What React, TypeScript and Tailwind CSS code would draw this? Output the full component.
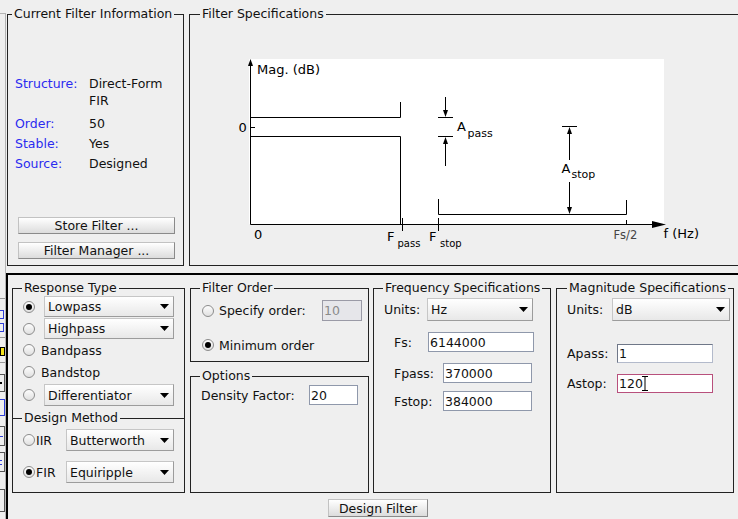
import React from 'react';

const Radio = ({ on }: { on?: boolean }) => (
  <span className="w-[12px] h-[12px] shrink-0 rounded-full border border-[#8c8c8c] bg-linear-to-b from-[#fdfdfd] to-[#e0e0e0] flex items-center justify-center">
    {on && <span className="w-[6px] h-[6px] rounded-full bg-black" />}
  </span>
);

const Select = ({ value, className }: { value: string; className: string }) => (
  <div
    className={`flex items-center justify-between shrink-0 pl-[3px] pr-[4px] border border-[#c6c6c6] border-r-[#9c9c9c] border-b-[#9c9c9c] bg-linear-to-b from-white to-[#e8e8e8] ${className}`}
  >
    <span>{value}</span>
    <svg width="9" height="5" viewBox="0 0 9 5">
      <path d="M0 0H9L4.5 5Z" fill="#000" />
    </svg>
  </div>
);

const Field = ({ children, className }: { children: React.ReactNode; className: string }) => (
  <div className={`flex items-center shrink-0 pl-[1px] border ${className}`}>{children}</div>
);

const Btn = ({ children, className }: { children: React.ReactNode; className: string }) => (
  <button
    type="button"
    className={`flex items-center justify-center border border-[#c2c2c2] border-r-[#8a8a8a] border-b-[#8a8a8a] bg-linear-to-b from-white to-[#dcdcdc] ${className}`}
  >
    {children}
  </button>
);

function FilterPlot() {
  return (
    <svg width="548" height="244" viewBox="190 21 548 244" className="block">
      <rect x="249" y="59" width="415" height="165" fill="#fff" />
      <g stroke="#000" strokeWidth="1" fill="none">
        <path d="M250.5 64V224.5H655" />
        <path d="M250 117.5H400.5V102" />
        <path d="M250 136.5H400.5V224" />
        <path d="M250 127.5H255" />
        <path d="M445.5 97V112M445.5 142V166M438 117.5H453M438 136.5H453" />
        <path d="M438.5 199V214.5H626.5V200" />
        <path d="M562 126.5H577M569.5 132V160M569.5 182V209" />
        <path d="M402.5 218V231M438.5 218V231M626.5 220V224" />
      </g>
      <g fill="#000">
        <polygon points="250.5,59 248,66 253,66" />
        <polygon points="652,221 666,224.5 652,228" />
        <polygon points="443,110 448,110 445.5,117" />
        <polygon points="445.5,137 443,144 448,144" />
        <polygon points="569.5,127 567,134 572,134" />
        <polygon points="569.5,214 567,207 572,207" />
      </g>
      <g fill="#000" fontSize="13">
        <text x="257" y="74">Mag. (dB)</text>
        <text x="238.5" y="131.5">0</text>
        <text x="254" y="239">0</text>
        <text x="387" y="241">F</text>
        <text x="397.5" y="247" fontSize="10">pass</text>
        <text x="429" y="241">F</text>
        <text x="440" y="247" fontSize="10">stop</text>
        <text x="457" y="131">A</text>
        <text x="467.5" y="137" fontSize="11">pass</text>
        <text x="561.5" y="172.5">A</text>
        <text x="571.5" y="178" fontSize="11">stop</text>
        <text x="613.5" y="239" fontSize="11.5" fill="#444">Fs/2</text>
        <text x="663.5" y="238">f (Hz)</text>
      </g>
    </svg>
  );
}

function ToolStrip() {
  return (
    <div className="w-[6px] h-[253px] shrink-0 border-r border-[#b4b4b4] flex flex-col">
      <div className="mt-[32px] h-px w-[5px] bg-[#9a9a9a]" />
      <div className="mt-[11px] h-[9px] w-[4px] border-y border-r border-[#2f3fd8]" />
      <div className="mt-[4px] h-[9px] w-[4px] border-y border-r border-[#2f3fd8]" />
      <div className="mt-[5px] h-px w-[5px] bg-[#9a9a9a]" />
      <div className="mt-[9px] h-[9px] w-[5px] border border-black bg-[#f5e21a]" />
      <div className="mt-[6px] h-px w-[5px] bg-[#9a9a9a]" />
      <div className="mt-[11px] h-[18px] w-[5px] border-y border-r border-[#555] flex items-center">
        <span className="w-[2px] h-[2px] bg-black" />
      </div>
      <div className="mt-[7px] h-[17px] w-[5px] border-y border-r border-[#2f3fd8]" />
      <div className="mt-[10px] h-[20px] w-[5px] border-y border-r border-[#555] flex items-center">
        <span className="w-[3px] h-px bg-[#2f3fd8]" />
      </div>
      <div className="mt-[6px] h-[20px] w-[5px] border-y border-r border-[#555] flex flex-col justify-center gap-[3px]">
        <span className="w-[2px] h-px bg-[#2f3fd8]" />
        <span className="w-[2px] h-px bg-[#2f3fd8]" />
      </div>
      <div className="mt-[17px] h-[23px] w-[5px] border-y border-r border-[#555]" />
    </div>
  );
}

export default function App() {
  return (
    <div className="w-[738px] h-[519px] overflow-hidden bg-[#efefef] font-['DejaVu_Sans',sans-serif] text-[12.5px] leading-[15px] text-[#111]">
      {/* upper half */}
      <div className="flex h-[266px]">
        <div className="w-[7px] shrink-0 pt-[13px]">
          <div className="w-[6px] h-[253px] border-t border-r border-[#b4b4b4]" />
        </div>

        <fieldset className="mt-[7px] w-[177px] h-[259px] shrink-0 border border-[#222]">
          <legend className="ml-[4px] px-[2px] leading-[14px]">Current Filter Information</legend>
          <div className="pl-[7px] mt-[54px]">
            <div className="grid grid-cols-[74px_1fr] leading-[17px]">
              <span className="text-[#2b2bf0]">Structure:</span>
              <span>
                Direct-Form
                <br />
                FIR
              </span>
            </div>
            <div className="grid grid-cols-[74px_1fr] leading-[20px] mt-[5px]">
              <span className="text-[#2b2bf0]">Order:</span>
              <span>50</span>
              <span className="text-[#2b2bf0]">Stable:</span>
              <span>Yes</span>
              <span className="text-[#2b2bf0]">Source:</span>
              <span>Designed</span>
            </div>
          </div>
          <Btn className="mt-[43px] ml-[10px] w-[157px] h-[17px]">Store Filter ...</Btn>
          <Btn className="mt-[8px] ml-[10px] w-[157px] h-[17px]">Filter Manager ...</Btn>
        </fieldset>

        <fieldset className="mt-[7px] ml-[5px] w-[560px] h-[259px] shrink-0 border border-[#222]">
          <legend className="ml-[10px] px-[2px] leading-[14px]">Filter Specifications</legend>
          <FilterPlot />
        </fieldset>
      </div>

      {/* lower half */}
      <div className="flex h-[253px]">
        <ToolStrip />
        <div className="mt-[7px] w-[740px] h-[260px] shrink-0 border-l-2 border-t-2 border-black pl-[4px] pt-[6px]">
          <div className="flex items-start">
            {/* Response type + design method */}
            <div className="w-[173px] shrink-0">
              <fieldset className="h-[137px] border border-b-0 border-[#222]">
                <legend className="ml-[9px] px-[2px] leading-[14px]">Response Type</legend>
                <div className="pl-[10px]">
                  <div className="mt-[1px] h-[21px] flex items-center">
                    <Radio on />
                    <Select value="Lowpass" className="ml-[9px] w-[130px] h-[21px]" />
                  </div>
                  <div className="mt-[1px] h-[21px] flex items-center">
                    <Radio />
                    <Select value="Highpass" className="ml-[9px] w-[130px] h-[21px]" />
                  </div>
                  <div className="h-[22px] flex items-center">
                    <Radio />
                    <span className="ml-[6px]">Bandpass</span>
                  </div>
                  <div className="h-[22px] flex items-center">
                    <Radio />
                    <span className="ml-[6px]">Bandstop</span>
                  </div>
                  <div className="mt-[1px] h-[22px] flex items-center">
                    <Radio />
                    <Select value="Differentiator" className="ml-[9px] w-[130px] h-[22px]" />
                  </div>
                </div>
              </fieldset>
              <fieldset className="-mt-[7px] h-[82px] border border-[#222]">
                <legend className="ml-[9px] px-[2px] leading-[14px]">Design Method</legend>
                <div className="pl-[10px]">
                  <div className="mt-[4px] h-[22px] flex items-center">
                    <Radio />
                    <span className="ml-[1px] w-[30px]">IIR</span>
                    <Select value="Butterworth" className="w-[108px] h-[22px]" />
                  </div>
                  <div className="mt-[10px] h-[22px] flex items-center">
                    <Radio on />
                    <span className="ml-[1px] w-[30px]">FIR</span>
                    <Select value="Equiripple" className="w-[108px] h-[22px]" />
                  </div>
                </div>
              </fieldset>
            </div>

            {/* Filter order + options */}
            <div className="ml-[5px] w-[179px] shrink-0">
              <fieldset className="h-[81px] border border-[#222]">
                <legend className="ml-[9px] px-[2px] leading-[14px]">Filter Order</legend>
                <div className="pl-[11px] pr-[6px]">
                  <div className="mt-[5px] h-[21px] flex items-center">
                    <Radio />
                    <span className="ml-[5px] flex-1">Specify order:</span>
                    <Field className="w-[40px] h-[21px] bg-[#e6e6ea] border-[#9a9aa6] text-[#8a8a8a]">10</Field>
                  </div>
                  <div className="mt-[13px] h-[22px] flex items-center">
                    <Radio on />
                    <span className="ml-[5px]">Minimum order</span>
                  </div>
                </div>
              </fieldset>
              <fieldset className="mt-[7px] h-[124px] border border-[#222]">
                <legend className="ml-[9px] px-[2px] leading-[14px]">Options</legend>
                <div className="pl-[10px] mt-[2px] h-[20px] flex items-center">
                  <span className="w-[108px]">Density Factor:</span>
                  <Field className="w-[49px] h-[20px] bg-white border-[#8f98ab]">20</Field>
                </div>
              </fieldset>
            </div>

            {/* Frequency specifications */}
            <fieldset className="ml-[4px] w-[178px] h-[212px] shrink-0 border border-[#222]">
              <legend className="ml-[9px] px-[2px] leading-[14px]">Frequency Specifications</legend>
              <div className="pl-[10px]">
                <div className="mt-[3px] h-[23px] flex items-center">
                  <span className="w-[43px]">Units:</span>
                  <Select value="Hz" className="w-[106px] h-[23px]" />
                </div>
                <div className="mt-[11px] h-[20px] flex items-center">
                  <span className="ml-[10px] w-[34px]">Fs:</span>
                  <Field className="w-[106px] h-[20px] bg-white border-[#8f98ab]">6144000</Field>
                </div>
                <div className="mt-[11px] h-[20px] flex items-center">
                  <span className="ml-[10px] w-[49px]">Fpass:</span>
                  <Field className="w-[89px] h-[20px] bg-white border-[#8f98ab]">370000</Field>
                </div>
                <div className="mt-[8px] h-[20px] flex items-center">
                  <span className="ml-[10px] w-[49px]">Fstop:</span>
                  <Field className="w-[89px] h-[20px] bg-white border-[#8f98ab]">384000</Field>
                </div>
              </div>
            </fieldset>

            {/* Magnitude specifications */}
            <fieldset className="ml-[5px] w-[178px] h-[212px] shrink-0 border border-[#222]">
              <legend className="ml-[10px] px-[2px] leading-[14px]">Magnitude Specifications</legend>
              <div className="pl-[10px]">
                <div className="mt-[3px] h-[23px] flex items-center">
                  <span className="w-[45px]">Units:</span>
                  <Select value="dB" className="w-[118px] h-[23px]" />
                </div>
                <div className="mt-[23px] h-[19px] flex items-center">
                  <span className="w-[50px]">Apass:</span>
                  <Field className="w-[96px] h-[19px] bg-white border-[#b3bacb] border-t-[#6f7788] border-l-[#6f7788]">1</Field>
                </div>
                <div className="mt-[11px] h-[19px] flex items-center">
                  <span className="w-[50px]">Astop:</span>
                  <Field className="w-[96px] h-[19px] bg-white border-[#b8507c]">
                    120
                    <svg width="6" height="15" viewBox="0 0 6 15" className="ml-[-1px]">
                      <path d="M0 0.5H6M3 0.5V14.5M0 14.5H6" stroke="#000" strokeWidth="1" fill="none" />
                    </svg>
                  </Field>
                </div>
              </div>
            </fieldset>
          </div>

          <Btn className="mt-[6px] ml-[316px] w-[100px] h-[18px]">Design Filter</Btn>
        </div>
      </div>
    </div>
  );
}
